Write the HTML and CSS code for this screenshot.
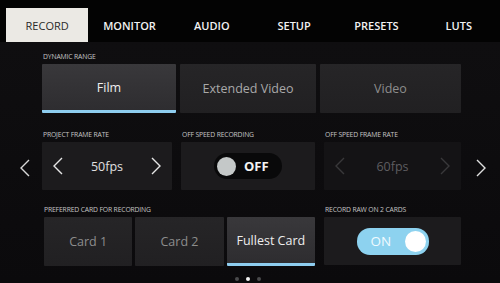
FILE: index.html
```html
<!DOCTYPE html>
<html>
<head>
<meta charset="utf-8">
<link rel="stylesheet" href="styles.css">
</head>
<body>
<nav class="tabs">
  <div class="tab active">RECORD</div>
  <div class="tab">MONITOR</div>
  <div class="tab">AUDIO</div>
  <div class="tab">SETUP</div>
  <div class="tab">PRESETS</div>
  <div class="tab">LUTS</div>
</nav>
<main class="panel">
  <section class="sec sec1">
    <div class="label">DYNAMIC RANGE</div>
    <div class="row1">
      <div class="btn sel">Film</div>
      <div class="btn">Extended Video</div>
      <div class="btn dim">Video</div>
    </div>
  </section>

  <div class="side side-l">
    <svg width="12" height="18" viewBox="0 0 12 18"><path d="M10 1 L2 9 L10 17" fill="none" stroke="#d8d8d8" stroke-width="1.4"/></svg>
  </div>
  <section class="sec sec2">
    <div class="grid3 labels">
      <div class="label">PROJECT FRAME RATE</div>
      <div class="label">OFF SPEED RECORDING</div>
      <div class="label">OFF SPEED FRAME RATE</div>
    </div>
    <div class="grid3">
      <div class="box stepper">
        <svg width="12" height="18" viewBox="0 0 12 18"><path d="M10 1 L2 9 L10 17" fill="none" stroke="#e6e6e6" stroke-width="1.4"/></svg>
        <span class="val">50fps</span>
        <svg width="12" height="18" viewBox="0 0 12 18"><path d="M2 1 L10 9 L2 17" fill="none" stroke="#e6e6e6" stroke-width="1.4"/></svg>
      </div>
      <div class="box center">
        <div class="toggle off"><span class="knob"></span><span class="tt">OFF</span></div>
      </div>
      <div class="box stepper disabled">
        <svg width="12" height="18" viewBox="0 0 12 18"><path d="M10 1 L2 9 L10 17" fill="none" stroke="#39383a" stroke-width="1.4"/></svg>
        <span class="val">60fps</span>
        <svg width="12" height="18" viewBox="0 0 12 18"><path d="M2 1 L10 9 L2 17" fill="none" stroke="#39383a" stroke-width="1.4"/></svg>
      </div>
    </div>
  </section>
  <div class="side side-r">
    <svg width="12" height="18" viewBox="0 0 12 18"><path d="M2 1 L10 9 L2 17" fill="none" stroke="#e0e0e0" stroke-width="1.4"/></svg>
  </div>

  <section class="sec sec3">
    <div class="grid3 labels">
      <div class="label span2 pl2">PREFERRED CARD FOR RECORDING</div>
      <div class="label">RECORD RAW ON 2 CARDS</div>
    </div>
    <div class="grid3">
      <div class="cards span2">
        <div class="btn dim">Card 1</div>
        <div class="btn dim">Card 2</div>
        <div class="btn sel">Fullest Card</div>
      </div>
      <div class="box center">
        <div class="toggle on"><span class="tt">ON</span><span class="knob"></span></div>
      </div>
    </div>
  </section>

  <div class="dots"><span></span><span class="cur"></span><span></span></div>
</main>
</body>
</html>
```
FILE: styles.css
```css
* { box-sizing: border-box; }
html, body { margin: 0; padding: 0; }
body {
  width: 500px;
  height: 283px;
  overflow: hidden;
  background: #0c0b0d;
  font-family: "Open Sans", "Noto Sans", sans-serif;
  color: #ddd;
}
.tabs {
  height: 42px;
  background: #030303;
  display: flex;
  align-items: flex-end;
  padding-left: 6px;
}
.tab {
  width: 83px;
  height: 34px;
  display: flex;
  align-items: center;
  justify-content: center;
  font-size: 11px;
  font-weight: 600;
  color: #f2f2f2;
}
.tab.active {
  background: #ebe9e4;
  color: #2a2a2a;
  font-weight: 400;
}
.panel {
  display: grid;
  grid-template-columns: 42px 419px 39px;
  background: linear-gradient(180deg, #0f0e10 0%, #0b0a0c 100%);
  height: 241px;
}
.sec { grid-column: 2; }
.sec1 { padding-top: 10px; }
.sec2 { grid-row: 2; padding-top: 15px; }
.sec3 { padding-top: 13px; }
.side {
  grid-row: 2;
  align-self: end;
  height: 48px;
  display: flex;
  align-items: center;
}
.side-l { grid-column: 1; justify-content: center; padding-left: 8px; }
.side-r { grid-column: 3; justify-content: center; }
.label {
  font-size: 6.8px;
  line-height: 10px;
  height: 10px;
  color: #c4c4c4;
  letter-spacing: -0.15px;
  padding-left: 1px;
  white-space: nowrap;
}
.pl2 { padding-left: 2px; }
.row1 {
  display: grid;
  grid-template-columns: 134px 136px 141px;
  gap: 4px;
  margin-top: 2px;
}
.grid3 {
  display: grid;
  grid-template-columns: 130px 134px 137px;
  column-gap: 9px;
}
.labels { margin-bottom: 2px; }
.span2 { grid-column: span 2; }
.btn {
  height: 49px;
  background: linear-gradient(180deg, #262527 0%, #212022 100%);
  border-radius: 1px;
  display: flex;
  align-items: center;
  justify-content: center;
  font-size: 12.5px;
  color: #a9a9a9;
}
.btn.dim { color: #8d8d8d; }
.btn.sel {
  background: linear-gradient(180deg, #39383b 0%, #2e2d30 100%);
  color: #eeeeee;
  border-bottom: 3px solid #8ecdef;
}
.box {
  height: 48px;
  background: #1c1b1d;
  border-radius: 1px;
}
.box.center { display: flex; align-items: center; justify-content: center; }
.stepper {
  display: flex;
  align-items: center;
  justify-content: space-between;
  padding: 0 10px;
}
.stepper .val { font-size: 12.5px; color: #e0e0e0; }
.stepper.disabled { background: #141315; }
.stepper.disabled .val { color: #5e5d60; }
.toggle {
  width: 68px;
  height: 26px;
  border-radius: 13px;
  display: flex;
  align-items: center;
  padding: 0 3px;
  gap: 8px;
}
.toggle .tt { font-size: 13px; font-weight: 700; }
.toggle.off { background: #09090a; }
.toggle.off .knob { width: 19px; height: 19px; border-radius: 50%; background: #c4c8c8; }
.toggle.off .tt { color: #f4f4f4; }
.toggle.on {
  width: 72px;
  height: 27px;
  background: #8dd2ef;
  justify-content: space-between;
  padding: 0 3px 0 14px;
}
.toggle.on .tt { color: #f0fbff; font-weight: 400; font-size: 13.5px; }
.toggle.on .knob { width: 21px; height: 21px; border-radius: 50%; background: #ffffff; }
.cards {
  display: grid;
  grid-template-columns: 1fr 1fr 1fr;
  gap: 3px;
  padding-left: 2px;
}
.dots {
  grid-column: 2;
  display: flex;
  justify-content: center;
  gap: 7px;
  padding-top: 9px;
  padding-right: 8px;
}
.dots span { width: 4px; height: 4px; border-radius: 50%; background: #4a4a4c; }
.dots span.cur { background: #f4f4f4; }
```
